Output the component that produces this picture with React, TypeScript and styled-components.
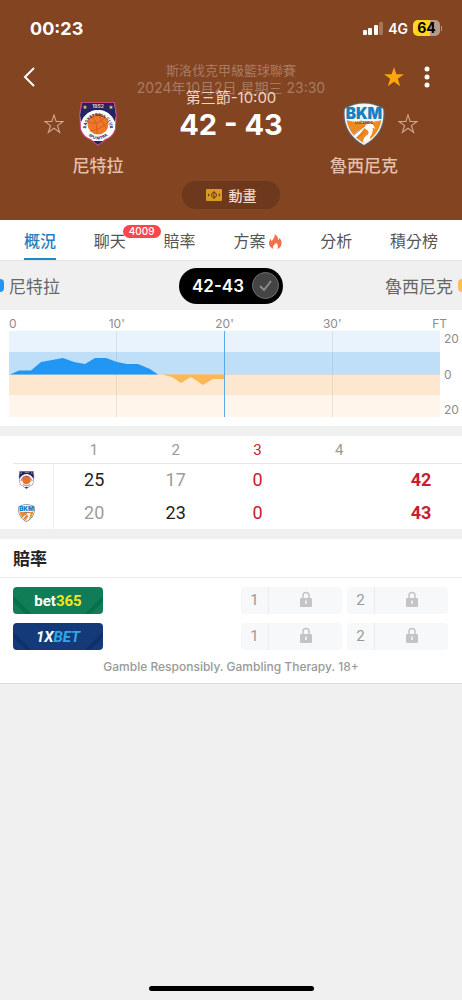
import React from "react";
import styled, { createGlobalStyle } from "styled-components";

const GlobalStyle = createGlobalStyle`
  *, *::before, *::after { box-sizing: border-box; }
  body {
    margin: 0;
    background: #f0f0f0;
    color: #222;
    font-family: Inter, "Noto Sans CJK TC", sans-serif;
    font-size: 16px;
  }
  button { margin: 0; padding: 0; border: 0; background: none; font: inherit; color: inherit; }
  h1, h2, p { margin: 0; font-weight: inherit; font-size: inherit; }
`;

const Page = styled.div`
  min-height: 100vh;
  display: flex;
  flex-direction: column;
`;

const Header = styled.header`
  background: #834421;
  color: #fff;
  padding-bottom: 11px;
`;

const StatusBar = styled.div`
  display: flex;
  align-items: center;
  justify-content: space-between;
  height: 56px;
  padding: 0 20px 0 30px;
`;

const Clock = styled.span`
  font-size: 18px;
  font-weight: 700;
`;

const StatusIcons = styled.div`
  display: flex;
  align-items: center;
  gap: 5px;
  font-size: 14px;
  font-weight: 600;
`;

const Battery = styled.span`
  display: flex;
  align-items: center;
  gap: 1px;
  &::after {
    content: "";
    width: 1px;
    height: 5px;
    background: #b39483;
  }
`;

const BatteryBody = styled.span`
  width: 27px;
  height: 16px;
  border-radius: 5px;
  background: linear-gradient(90deg, #fed71b 64%, #b89a8b 64%);
  color: #000;
  font-size: 14px;
  font-weight: 700;
  line-height: 16px;
  text-align: center;
`;

const NavBar = styled.div`
  display: flex;
  align-items: center;
  justify-content: space-between;
  height: 42px;
  padding: 0 22px;
`;

const NavSide = styled.div<{ $end?: boolean }>`
  display: flex;
  align-items: center;
  justify-content: ${(p) => (p.$end ? "flex-end" : "flex-start")};
  gap: 14px;
  flex: 0 0 60px;
`;

const IconButton = styled.button`
  display: flex;
  align-items: center;
  justify-content: center;
  cursor: pointer;
`;

const MatchMeta = styled.div`
  padding-top: 4px;
  color: #a77b63;
  font-size: 13px;
  line-height: 18px;
  text-align: center;
  white-space: nowrap;
`;

const MatchDate = styled.p`
  font-size: 14px;
`;

const MatchRow = styled.div`
  display: flex;
  justify-content: space-between;
  padding: 0 44px;
  margin-top: -9px;
`;

const Team = styled.div<{ $away?: boolean }>`
  display: flex;
  flex-direction: ${(p) => (p.$away ? "row-reverse" : "row")};
  padding-top: 13px;
`;

const FavoriteButton = styled(IconButton)`
  width: 20px;
  height: 44px;
`;

const TeamBody = styled.div`
  display: flex;
  flex-direction: column;
  align-items: center;
  gap: 8px;
  width: 68px;
  color: #e3c0ac;
  font-size: 17px;
  font-weight: 500;
  line-height: 24px;
  white-space: nowrap;
`;

const ScoreBlock = styled.div`
  text-align: center;
  white-space: nowrap;
`;

const Period = styled.p`
  color: #f0d5c5;
  font-size: 15px;
  line-height: 18px;
`;

const Score = styled.h1`
  font-size: 29px;
  font-weight: 700;
  line-height: 36px;
`;

const AnimationButton = styled.button`
  display: flex;
  align-items: center;
  justify-content: center;
  gap: 7px;
  width: 98px;
  height: 28px;
  margin: 3px auto 0;
  border-radius: 14px;
  background: #6d381c;
  color: #f0d8ca;
  font-size: 14px;
  font-weight: 500;
`;

const Tabs = styled.nav`
  display: flex;
  justify-content: space-between;
  height: 41px;
  padding: 0 24px;
  background: #fff;
  border-bottom: 1px solid #e4e4e4;
`;

const Tab = styled.a<{ $active?: boolean }>`
  position: relative;
  display: flex;
  align-items: center;
  gap: 4px;
  padding-top: 4px;
  border-bottom: 2px solid ${(p) => (p.$active ? "#2787c0" : "transparent")};
  color: ${(p) => (p.$active ? "#1f80bd" : "#555")};
  font-weight: ${(p) => (p.$active ? 500 : 400)};
  line-height: 24px;
  text-decoration: none;
  white-space: nowrap;
`;

const Badge = styled.span`
  position: absolute;
  left: 29px;
  top: 5px;
  padding: 0 6px;
  border-radius: 7px;
  background: #f9464c;
  color: #fff;
  font-size: 10px;
  font-weight: 500;
  line-height: 13px;
`;

const TrendHead = styled.div`
  display: flex;
  align-items: center;
  justify-content: space-between;
  height: 49px;
  color: #666;
  font-size: 17px;
`;

const TrendTeam = styled.div<{ $away?: boolean }>`
  display: flex;
  flex: 1;
  flex-direction: ${(p) => (p.$away ? "row-reverse" : "row")};
  align-items: center;
  gap: 5px;
  &::before {
    content: "";
    width: 4px;
    height: 13px;
    border-radius: ${(p) => (p.$away ? "4px 0 0 4px" : "0 4px 4px 0")};
    background: ${(p) => (p.$away ? "#fdbb5c" : "#2196f3")};
  }
`;

const ScoreToggle = styled.button`
  display: flex;
  align-items: center;
  justify-content: space-between;
  width: 104px;
  height: 36px;
  padding: 0 4px 0 13px;
  border-radius: 18px;
  background: #000;
  color: #fff;
  font-size: 17px;
  font-weight: 600;
`;

const CheckCircle = styled.span`
  display: flex;
  align-items: center;
  justify-content: center;
  width: 27px;
  height: 27px;
  border: 1px solid #707070;
  border-radius: 50%;
  background: #444;
`;

const Panel = styled.section`
  background: #fff;
  margin-bottom: 10px;
`;

const ChartPanel = styled(Panel)`
  display: grid;
  grid-template-columns: 1fr 22px;
  grid-template-rows: 21px 86px;
  padding-bottom: 9px;
  padding-left: 9px;
  color: #8c8c8c;
  font-size: 12px;
  line-height: 14px;
`;

const TimeAxis = styled.div`
  display: grid;
  grid-template-columns: 1fr 2fr 2fr 2fr 1fr;
  align-items: center;
  padding-top: 7px;
  text-align: center;
  & > :first-child { text-align: left; }
  & > :last-child { text-align: right; margin-right: -7px; }
`;

const Plot = styled.svg`
  grid-column: 1;
  grid-row: 2;
  display: block;
  width: 100%;
  height: 86px;
`;

const ValueAxis = styled.div`
  grid-column: 2;
  grid-row: 2;
  display: flex;
  flex-direction: column;
  justify-content: space-between;
  padding: 1px 0 0 4px;
`;

const QuarterTable = styled.table`
  width: calc(100% - 13px);
  margin-left: 13px;
  border-collapse: collapse;
  table-layout: fixed;
  font-family: Roboto, Inter, sans-serif;
  text-align: center;
`;

const QuarterHead = styled.th<{ $live?: boolean }>`
  height: 27px;
  padding: 2px 0 0;
  border-bottom: 1px solid #e6e6e6;
  color: ${(p) => (p.$live ? "#c8202f" : "#9a9a9a")};
  font-size: 15px;
  font-weight: 400;
`;

const CornerHead = styled(QuarterHead)`
  width: 40px;
`;

const TeamHead = styled.th`
  height: 33px;
  padding: 0 13px 0 0;
  border-right: 1px solid #f0f0f0;
  & > svg { display: block; margin: 0 auto; }
`;

const tones = { win: "#222", lose: "#9c9c9c", live: "#c8202f", total: "#c8202f" };

const QuarterCell = styled.td<{ $tone: keyof typeof tones }>`
  padding: 0;
  color: ${(p) => tones[p.$tone]};
  font-size: 18px;
  font-weight: ${(p) => (p.$tone === "total" ? 700 : 400)};
  line-height: 20px;
`;

const OddsPanel = styled(Panel)`
  border-bottom: 1px solid #ddd;
  margin-bottom: 0;
`;

const OddsTitle = styled.h2`
  height: 39px;
  padding-left: 13px;
  border-bottom: 1px solid #ececec;
  color: #222;
  font-size: 17px;
  font-weight: 700;
  line-height: 40px;
`;

const OddsList = styled.div`
  display: flex;
  flex-direction: column;
  gap: 9px;
  padding: 9px 14px 0 13px;
`;

const OddsRow = styled.div`
  display: flex;
  align-items: center;
  justify-content: space-between;
`;

const brands = {
  bet365: { base: "#117d57", stripe: "#09704c" },
  xbet: { base: "#143a7a", stripe: "#0e316c" },
};

const Bookmaker = styled.a<{ $brand: keyof typeof brands }>`
  display: flex;
  align-items: center;
  justify-content: center;
  width: 90px;
  height: 27px;
  border-radius: 4px;
  background: ${({ $brand }) => {
    const { base, stripe } = brands[$brand];
    const corner = `transparent 11%, ${stripe} 11% 16%, transparent 16%`;
    return `linear-gradient(45deg, ${corner}), linear-gradient(-45deg, ${corner}), ${base}`;
  }};
  color: #fff;
  font-family: Roboto, sans-serif;
  font-size: 15px;
  font-weight: 700;
  font-style: ${(p) => (p.$brand === "xbet" ? "italic" : "normal")};
  text-decoration: none;
`;

const BrandAccent = styled.span<{ $color: string }>`
  color: ${(p) => p.$color};
`;

const OddsGroup = styled.div`
  display: flex;
  gap: 5px;
`;

const OddsButton = styled.button`
  display: flex;
  align-items: center;
  width: 101px;
  height: 27px;
  border-radius: 4px;
  background: #f7f8fa;
  color: #999;
  font-family: Roboto, sans-serif;
  font-size: 15px;
`;

const OddsLabel = styled.span`
  width: 28px;
  line-height: 27px;
  border-right: 1px solid #ececee;
`;

const OddsValue = styled.span`
  display: flex;
  flex: 1;
  justify-content: center;
  padding-bottom: 4px;
`;

const Disclaimer = styled.p`
  padding: 8px 0;
  color: #999;
  font-size: 12px;
  font-weight: 500;
  line-height: 17px;
  text-align: center;
`;

const HomeIndicator = styled.div`
  width: 165px;
  height: 5px;
  margin: auto auto 9px;
  border-radius: 3px;
  background: #000;
`;

const STAR = "M12 2l2.4 7.3H22l-6.2 4.5 2.4 7.4-6.2-4.5-6.2 4.5 2.4-7.4L2 9.3h7.6z";

function Star({ filled }: { filled?: boolean }) {
  return filled ? (
    <svg width="24" height="24" viewBox="0 0 24 24" aria-hidden="true">
      <path d={STAR} fill="#fda50f" />
    </svg>
  ) : (
    <svg width="20" height="20" viewBox="1 1 22 22" aria-hidden="true">
      <path d={STAR} fill="none" stroke="#d5a890" strokeWidth="1.2" />
    </svg>
  );
}

function NitraLogo({ width, height }: { width: number; height: number }) {
  return (
    <svg width={width} height={height} viewBox="0 0 38 44" aria-hidden="true">
      <path d="M2 0H36L38 13Q37 22 37 27Q35 35 27 38L19 44L11 38Q3 35 1 27Q1 20 0 13Z" fill="#d0447a" />
      <path d="M3 1H35L37 13Q36 22 36 27Q33 35 26 37L19 43L12 37Q5 35 2 27Q2 20 1 13Z" fill="#fff" />
      <path d="M3 1H35L37 13L36 20Q31 8 19 8Q7 8 2 20L1 13Z" fill="#252363" />
      <path d="M14 39L19 43L24 39Z" fill="#252363" />
      <circle cx="19" cy="23" r="15" fill="#fff" />
      <circle cx="19" cy="22" r="10.5" fill="#f0782a" />
      <path d="M9 20Q18 24 27 15M11 29Q21 28 29 20M12 14Q19 19 18 32M20 12Q23 22 28 27" fill="none" stroke="#c9591f" strokeWidth=".8" />
      <path d="M6 3l.6 1.500h1.600L7 5.500l.5 1.600L6 6.200 4.500 7.100 5 5.500 3.800 4.500h1.600zM32 3l.6 1.500h1.600L33 5.500l.5 1.600L32 6.200l-1.500.9.500-1.600-1.200-1h1.600z" fill="#edc568" />
      <text x="19" y="6" fill="#e6d2ac" fontSize="5" fontWeight="700" textAnchor="middle">1952</text>
      <path id="nitra-top" d="M7 26A12 12 0 1 1 31 26" fill="none" />
      <path id="nitra-bottom" d="M5 29Q19 46 33 29" fill="none" />
      <text fill="#252363" fontSize="4" fontWeight="700" textAnchor="middle">
        <textPath href="#nitra-top" startOffset="50%">BASKETBALL CLUB</textPath>
      </text>
      <text fill="#252363" fontSize="4" fontWeight="700" textAnchor="middle">
        <textPath href="#nitra-bottom" startOffset="50%">SPU NITRA</textPath>
      </text>
    </svg>
  );
}

function BkmLogo({ width, height }: { width: number; height: number }) {
  return (
    <svg width={width} height={height} viewBox="0 0 44 46" aria-hidden="true">
      <path d="M1 6Q22-5 43 6Q47 33 22 46Q-3 33 1 6Z" fill="#59636e" />
      <path d="M2 7Q22-4 42 7Q45 32 22 45Q-1 32 2 7Z" fill="#f4f6f8" />
      <path d="M4 19Q22 24 40 19Q38 34 22 43Q6 34 4 19Z" fill="#ef8a23" />
      <path d="M21 42Q21 37 26 34Q28 31 25 29Q22 28 23 25Q26 21 31 23L34 28L31 27Q32 31 30 34Q27 37 29 39L22 43Z" fill="#fff" />
      <path d="M10 35Q14 32 16 30L25 24L18 33L13 38Z" fill="#fff" />
      <path d="M11 35L23 25M15 38L22 31" fill="none" stroke="#8a7464" strokeWidth=".8" />
      <text x="22" y="18" fill="#1680c4" fontFamily="Inter, sans-serif" fontSize="16" fontWeight="900" textAnchor="middle">BKM</text>
      <text x="22" y="23" fill="#594c48" fontSize="4" fontWeight="800" textAnchor="middle">LUČENEC</text>
    </svg>
  );
}

function Signal() {
  return (
    <svg width="20" height="13" viewBox="0 0 20 13" aria-hidden="true">
      <g fill="#fff">
        <rect x="0" y="8" width="4" height="5" rx="1" />
        <rect x="5" y="6" width="4" height="7" rx="1" />
        <rect x="11" y="3" width="4" height="10" rx="1" />
      </g>
      <rect x="16" y="0" width="4" height="13" rx="1" fill="#a5765c" />
    </svg>
  );
}

function CourtIcon() {
  return (
    <svg width="16" height="12" viewBox="0 0 16 12" aria-hidden="true">
      <rect width="16" height="12" rx="1" fill="#d99a20" />
      <path d="M8 2V10" stroke="#6d381c" />
      <circle cx="8" cy="6" r="2.500" fill="none" stroke="#6d381c" />
      <path d="M2 4.500L4 6L2 7.500ZM14 4.500L12 6L14 7.500Z" fill="#6d381c" />
    </svg>
  );
}

function Flame() {
  return (
    <svg width="13" height="15" viewBox="0 0 14 16" aria-hidden="true">
      <path d="M6 0C9 2 10 4 10 6.500C11 6 11 5 11 4C13 6 14 8 13.500 11C13 14 11 15.500 9 16C10.500 13 9.500 11 7.500 9C7.500 11 5.500 11 4.500 13C4 14 4.500 15 5 16C2 15 0 13 0 10C0 8 1 6 2 5C2 6 2.500 7 3 7.500C5 5 6.500 3 6 0Z" fill="#f0714d" />
    </svg>
  );
}

function Lock() {
  return (
    <svg width="12" height="16" viewBox="0 0 12 16" aria-hidden="true">
      <path d="M3 8V4.500a3 3 0 0 1 6 0V8" fill="none" stroke="#c4c4c4" strokeWidth="1.500" />
      <rect y="7" width="12" height="9" rx="1" fill="#c4c4c4" />
      <path d="M6 9.500V13" stroke="#f7f8fa" strokeWidth="1.500" />
    </svg>
  );
}

function TrendPlot() {
  return (
    <Plot viewBox="0 0 431 86" preserveAspectRatio="none" role="img" aria-label="比分走勢">
      <rect width="431" height="22" fill="#e8f3fe" />
      <rect y="21" width="431" height="22" fill="#bfdff9" />
      <rect y="43" width="431" height="22" fill="#fde8cf" />
      <rect y="64" width="431" height="22" fill="#fff5eb" />
      <path d="M0 43.500H431" stroke="#ded9d3" />
      <path d="M107.500 0V86M323.500 0V86" stroke="#8094a8" strokeOpacity=".18" />
      <path d="M1 43.500L10 39.500H22L32 31L54 27L65 31L76 33L86 27H97L108 31L118 33H129L141 38L149 43.500Z" fill="#2196f3" />
      <path d="M153 43.500L163 46L172 52L182 46L194 54L204 48H215V43.500Z" fill="#fdb853" />
      <path d="M215.500 0V86" stroke="#5aaaea" />
    </Plot>
  );
}

type Tone = keyof typeof tones;
const quarterRows: { name: string; Logo: typeof BkmLogo; cells: [string, Tone][] }[] = [
  { name: "尼特拉", Logo: NitraLogo, cells: [["25", "win"], ["17", "lose"], ["0", "live"], ["", "lose"], ["42", "total"]] },
  { name: "魯西尼克", Logo: BkmLogo, cells: [["20", "lose"], ["23", "win"], ["0", "live"], ["", "lose"], ["43", "total"]] },
];

function OddsOptions() {
  return (
    <OddsGroup>
      {["1", "2"].map((label) => (
        <OddsButton key={label} disabled>
          <OddsLabel>{label}</OddsLabel>
          <OddsValue><Lock /></OddsValue>
        </OddsButton>
      ))}
    </OddsGroup>
  );
}

export default function App() {
  return (
    <Page>
      <GlobalStyle />
      <Header>
        <StatusBar>
          <Clock>00:23</Clock>
          <StatusIcons>
            <Signal />
            <span>4G</span>
            <Battery><BatteryBody>64</BatteryBody></Battery>
          </StatusIcons>
        </StatusBar>
        <NavBar>
          <NavSide>
            <IconButton aria-label="返回">
              <svg width="18" height="20" viewBox="0 0 18 20" aria-hidden="true">
                <path d="M12 1L3 10L12 19" fill="none" stroke="#fff" strokeWidth="2" />
              </svg>
            </IconButton>
          </NavSide>
          <MatchMeta>
            <p>斯洛伐克甲級籃球聯賽</p>
            <MatchDate>2024年10月2日 星期三 23:30</MatchDate>
          </MatchMeta>
          <NavSide $end>
            <IconButton aria-label="收藏比賽"><Star filled /></IconButton>
            <IconButton aria-label="更多">
              <svg width="20" height="22" viewBox="0 0 20 22" fill="#fff" aria-hidden="true">
                <circle cx="7" cy="3" r="2.500" />
                <circle cx="7" cy="11" r="2.500" />
                <circle cx="7" cy="19" r="2.500" />
              </svg>
            </IconButton>
          </NavSide>
        </NavBar>
        <MatchRow>
          <Team>
            <FavoriteButton aria-label="收藏尼特拉"><Star /></FavoriteButton>
            <TeamBody><NitraLogo width={38} height={44} />尼特拉</TeamBody>
          </Team>
          <ScoreBlock>
            <Period>第三節-10:00</Period>
            <Score>42 - 43</Score>
          </ScoreBlock>
          <Team $away>
            <FavoriteButton aria-label="收藏魯西尼克"><Star /></FavoriteButton>
            <TeamBody><BkmLogo width={44} height={44} />魯西尼克</TeamBody>
          </Team>
        </MatchRow>
        <AnimationButton><CourtIcon />動畫</AnimationButton>
      </Header>

      <Tabs>
        <Tab href="#overview" $active>概況</Tab>
        <Tab href="#chat">聊天<Badge>4009</Badge></Tab>
        <Tab href="#odds">賠率</Tab>
        <Tab href="#tips">方案<Flame /></Tab>
        <Tab href="#analysis">分析</Tab>
        <Tab href="#standings">積分榜</Tab>
      </Tabs>

      <TrendHead>
        <TrendTeam>尼特拉</TrendTeam>
        <ScoreToggle>
          42-43
          <CheckCircle>
            <svg width="13" height="12" viewBox="0 0 13 12" aria-hidden="true">
              <path d="M1 6L5 10L12 1" fill="none" stroke="#8b8b8b" strokeWidth="2" />
            </svg>
          </CheckCircle>
        </ScoreToggle>
        <TrendTeam $away>魯西尼克</TrendTeam>
      </TrendHead>

      <ChartPanel>
        <TimeAxis>
          <span>0</span><span>10'</span><span>20'</span><span>30'</span><span>FT</span>
        </TimeAxis>
        <TrendPlot />
        <ValueAxis>
          <span>20</span><span>0</span><span>20</span>
        </ValueAxis>
      </ChartPanel>

      <Panel>
        <QuarterTable>
          <thead>
            <tr>
              <CornerHead />
              <QuarterHead>1</QuarterHead>
              <QuarterHead>2</QuarterHead>
              <QuarterHead $live>3</QuarterHead>
              <QuarterHead>4</QuarterHead>
              <QuarterHead />
            </tr>
          </thead>
          <tbody>
            {quarterRows.map(({ name, Logo, cells }) => (
              <tr key={name}>
                <TeamHead scope="row" aria-label={name}><Logo width={17} height={18} /></TeamHead>
                {cells.map(([value, tone], i) => (
                  <QuarterCell key={i} $tone={tone}>{value}</QuarterCell>
                ))}
              </tr>
            ))}
          </tbody>
        </QuarterTable>
      </Panel>

      <OddsPanel>
        <OddsTitle>賠率</OddsTitle>
        <OddsList>
          <OddsRow>
            <Bookmaker href="#bet365" $brand="bet365">bet<BrandAccent $color="#f7e51c">365</BrandAccent></Bookmaker>
            <OddsOptions />
          </OddsRow>
          <OddsRow>
            <Bookmaker href="#1xbet" $brand="xbet">1X<BrandAccent $color="#2fa9e8">BET</BrandAccent></Bookmaker>
            <OddsOptions />
          </OddsRow>
        </OddsList>
        <Disclaimer>Gamble Responsibly. Gambling Therapy. 18+</Disclaimer>
      </OddsPanel>
      <HomeIndicator />
    </Page>
  );
}
